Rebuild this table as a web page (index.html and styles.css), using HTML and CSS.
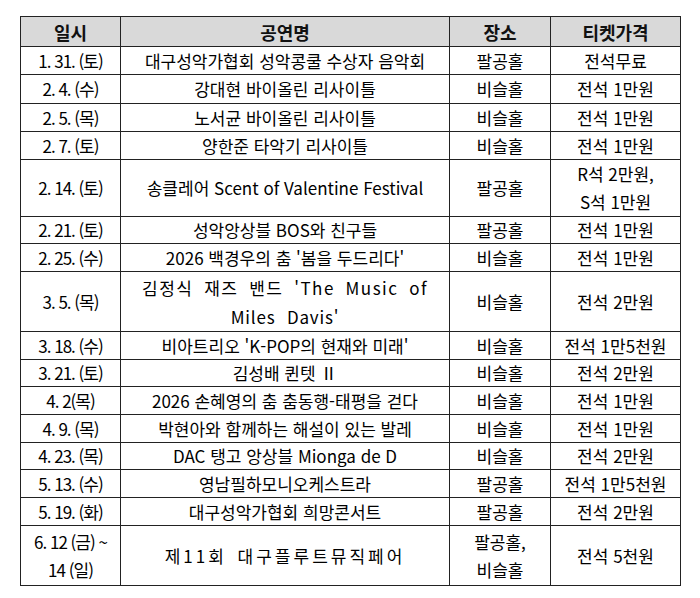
FILE: index.html
```html
<!DOCTYPE html>
<html lang="ko">
<head>
<meta charset="utf-8">
<link rel="stylesheet" href="styles.css">
</head>
<body>
<table class="sched">
  <colgroup>
    <col class="c-date"><col class="c-name"><col class="c-place"><col class="c-price">
  </colgroup>
  <thead>
    <tr class="h30"><th>일시</th><th>공연명</th><th>장소</th><th>티켓가격</th></tr>
  </thead>
  <tbody>
    <tr class="h28"><td class="d">1. 31. (토)</td><td>대구성악가협회 성악콩쿨 수상자 음악회</td><td>팔공홀</td><td>전석무료</td></tr>
    <tr class="h29"><td class="d">2. 4. (수)</td><td>강대현 바이올린 리사이틀</td><td>비슬홀</td><td>전석 1만원</td></tr>
    <tr class="h28"><td class="d">2. 5. (목)</td><td>노서균 바이올린 리사이틀</td><td>비슬홀</td><td>전석 1만원</td></tr>
    <tr class="h28"><td class="d">2. 7. (토)</td><td>양한준 타악기 리사이틀</td><td>비슬홀</td><td>전석 1만원</td></tr>
    <tr class="h55"><td class="d">2. 14. (토)</td><td>송클레어 Scent of Valentine Festival</td><td>팔공홀</td><td class="ml">R석 2만원,<br>S석 1만원</td></tr>
    <tr class="h27"><td class="d">2. 21. (토)</td><td>성악앙상블 BOS와 친구들</td><td>팔공홀</td><td>전석 1만원</td></tr>
    <tr class="h28"><td class="d">2. 25. (수)</td><td>2026 백경우의 춤 '봄을 두드리다'</td><td>비슬홀</td><td>전석 1만원</td></tr>
    <tr class="h60"><td class="d">3. 5. (목)</td><td class="wide"><div class="just">김정식 재즈 밴드 'The Music of</div><div class="line2">Miles Davis'</div></td><td>비슬홀</td><td>전석 2만원</td></tr>
    <tr class="h28"><td class="d">3. 18. (수)</td><td>비아트리오 'K-POP의 현재와 미래'</td><td>비슬홀</td><td>전석 1만5천원</td></tr>
    <tr class="h27"><td class="d">3. 21. (토)</td><td>김성배 퀸텟 Ⅱ</td><td>비슬홀</td><td>전석 2만원</td></tr>
    <tr class="h28"><td class="d">4. 2(목)</td><td>2026 손혜영의 춤 춤동행-태평을 걷다</td><td>비슬홀</td><td>전석 1만원</td></tr>
    <tr class="h28"><td class="d">4. 9. (목)</td><td>박현아와 함께하는 해설이 있는 발레</td><td>비슬홀</td><td>전석 1만원</td></tr>
    <tr class="h27"><td class="d">4. 23. (목)</td><td>DAC 탱고 앙상블 Mionga de D</td><td>비슬홀</td><td>전석 2만원</td></tr>
    <tr class="h28"><td class="d">5. 13. (수)</td><td>영남필하모니오케스트라</td><td>팔공홀</td><td>전석 1만5천원</td></tr>
    <tr class="h28"><td class="d">5. 19. (화)</td><td>대구성악가협회 희망콘서트</td><td>팔공홀</td><td>전석 2만원</td></tr>
    <tr class="h60"><td class="d ml">6. 12 (금) ~<br>14 (일)</td><td class="spaced">제11회 대구플루트뮤직페어</td><td class="ml">팔공홀,<br>비슬홀</td><td>전석 5천원</td></tr>
  </tbody>
</table>
</body>
</html>
```

FILE: styles.css
```css
html, body {
  margin: 0;
  padding: 0;
  background: #ffffff;
}

body {
  font-family: "Noto Sans CJK KR", "Noto Sans", sans-serif;
  color: #000000;
}

.sched {
  border-collapse: collapse;
  margin: 16px 0 0 20px;
  width: 660px;
  table-layout: fixed;
  font-size: 17px;
  letter-spacing: 0;
}

.c-date { width: 100px; }
.c-name { width: 329px; }
.c-place { width: 101px; }
.c-price { width: 130px; }

.sched th,
.sched td {
  border: 1px solid #222222;
  padding: 0 1px;
  text-align: center;
  vertical-align: middle;
  line-height: 20px;
  white-space: nowrap;
  overflow: hidden;
}

.sched th {
  background: #d9d9d9;
  font-weight: 700;
  font-size: 18px;
  color: #111111;
}

.sched td.d {
  letter-spacing: -1px;
}

.sched td.ml {
  line-height: 28px;
}

.h30 { height: 30px; }
.h29 { height: 29px; }
.h28 { height: 28px; }
.h27 { height: 27px; }
.h55 { height: 55px; }
.h60 { height: 60px; }

.wide {
  line-height: 29px;
}

.just {
  width: 286px;
  margin: 0 auto;
  text-align: justify;
  text-align-last: justify;
  letter-spacing: 1.5px;
  line-height: 29px;
}

.line2 {
  text-align: center;
  word-spacing: 6px;
  letter-spacing: 0.8px;
  line-height: 29px;
}

.spaced {
  letter-spacing: 3px;
  word-spacing: 3px;
}
```
